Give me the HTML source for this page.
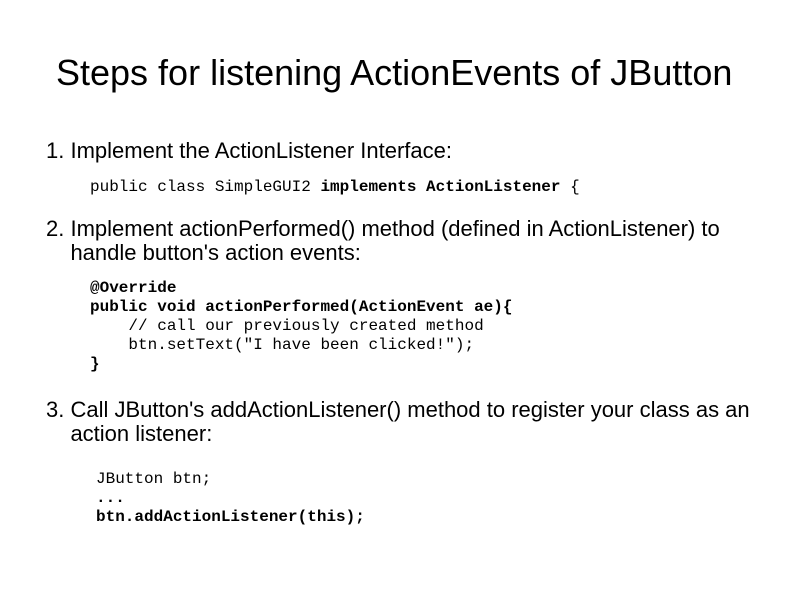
<!DOCTYPE html>
<html><head><meta charset="utf-8"><style>
body{margin:0;width:787px;height:589px;background:#fff;position:relative;overflow:hidden;font-family:"Liberation Sans",sans-serif;color:#000}
.a{position:absolute;white-space:pre}
.t{font-size:36px;line-height:40px}
.l{font-size:22px;line-height:24px}
.c{font-family:"Liberation Mono",monospace;font-size:16px;line-height:19px}
b{font-weight:bold}
</style></head><body>
<div class="a t" style="left:56px;top:53px">Steps for listening ActionEvents of JButton</div>
<div class="a l" style="left:46px;top:139px">1. Implement the ActionListener Interface:</div>
<div class="a c" style="left:90px;top:178px">public class SimpleGUI2 <b>implements ActionListener</b> {</div>
<div class="a l" style="left:46px;top:217px">2. Implement actionPerformed() method (defined in ActionListener) to
    handle button's action events:</div>
<div class="a c" style="left:90px;top:279px"><b>@Override
public void actionPerformed(ActionEvent ae){</b>
    // call our previously created method
    btn.setText("I have been clicked!");
<b>}</b></div>
<div class="a l" style="left:46px;top:398px">3. Call JButton's addActionListener() method to register your class as an
    action listener:</div>
<div class="a c" style="left:96px;top:470px">JButton btn;
<b>...
btn.addActionListener(this);</b></div>
</body></html>
